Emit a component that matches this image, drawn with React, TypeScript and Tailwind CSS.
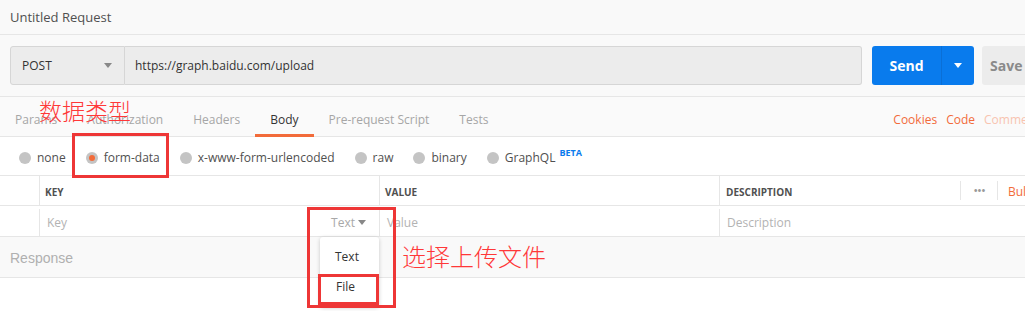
const tabs = ["Params", "Authorization", "Headers", "Body", "Pre-request Script", "Tests"];
const bodies = ["none", "form-data", "x-www-form-urlencoded", "raw", "binary", "GraphQL"];

function Caret({ className = "" }: { className?: string }) {
  return (
    <svg width="8" height="5" viewBox="0 0 8 5" className={className}>
      <path d="M0 0h8L4 5z" fill="currentColor" />
    </svg>
  );
}

export default function App() {
  return (
    <div className="relative h-[311px] w-[1025px] overflow-hidden bg-white font-['Open_Sans',sans-serif] text-[#505050]">
      {/* title */}
      <div className="flex h-[35px] items-center border-b border-[#e6e6e6] bg-[#f9f9f9] px-[10px] pt-[1px] text-[13px]">
        Untitled Request
      </div>

      {/* url bar */}
      <div className="flex h-[62px] items-center border-b border-[#e6e6e6] bg-[#f9f9f9] pl-[10px]">
        <div className="flex h-[39px] w-[115px] shrink-0 items-center justify-between rounded-l-[3px] border border-[#d6d6d6] bg-[#ececec] pl-[11px] pr-[12px] text-[12px] text-[#333]">
          POST
          <Caret className="text-[#888]" />
        </div>
        <div className="flex h-[39px] w-[737px] shrink-0 items-center rounded-r-[3px] border border-l-0 border-[#d6d6d6] bg-[#ececec] pl-[10px] text-[12px] text-[#333]">
          https://graph.baidu.com/upload
        </div>
        <div className="ml-[10px] flex h-[39px] w-[102px] shrink-0 rounded-[3px] bg-[#097bed] text-white">
          <div className="flex w-[69px] items-center justify-center text-[14px] font-bold">Send</div>
          <div className="flex flex-1 items-center justify-center border-l border-[#0a6fd6]">
            <Caret />
          </div>
        </div>
        <div className="ml-[8px] flex h-[39px] w-[60px] shrink-0 items-center rounded-l-[3px] bg-[#ececec] pl-[8px] text-[14px] font-bold text-[#8a8a8a]">
          Save
        </div>
      </div>

      {/* tabs */}
      <div className="flex h-[40px] items-stretch border-b border-[#e6e6e6] bg-[#fafafa] text-[12px]">
        {tabs.map((t) => (
          <div
            key={t}
            className={`relative flex shrink-0 items-center px-[15px] pt-[6px] ${
              t === "Body" ? "text-[#333]" : "text-[#a6a6a6]"
            }`}
          >
            {t}
            {t === "Body" && <div className="absolute bottom-[-1px] left-0 right-0 h-[3px] bg-[#f26b3a]" />}
          </div>
        ))}
        <div className="ml-auto flex shrink-0 items-center gap-[9px] pt-[6px] text-[12px]">
          <span className="text-[#f26b3a]">Cookies</span>
          <span className="text-[#f26b3a]">Code</span>
          <span className="w-[41px] overflow-hidden whitespace-nowrap text-[#f8c4b0]">Comments</span>
        </div>
      </div>

      {/* body types */}
      <div className="flex h-[39px] items-center border-b border-[#e6e6e6] pl-[19px] pt-[3px] text-[12px]">
        {bodies.map((b) => (
          <div key={b} className="mr-[20px] flex shrink-0 items-center gap-[6px]">
            <span className="flex h-[12px] w-[12px] items-center justify-center rounded-full bg-[#c4c4c4]">
              {b === "form-data" && <span className="h-[6px] w-[6px] rounded-full bg-[#f26b3a]" />}
            </span>
            <span className="text-[#505050]">{b}</span>
            {b === "GraphQL" && (
              <span className="-ml-[2px] -mt-[10px] text-[9px] font-bold text-[#097bed]">BETA</span>
            )}
          </div>
        ))}
      </div>

      {/* table header */}
      <div className="flex h-[30px] border-b border-[#e6e6e6] text-[10px] font-bold text-[#505050]">
        <div className="w-[40px] shrink-0 border-r border-[#e6e6e6]" />
        <div className="flex w-[340px] shrink-0 items-center border-r border-[#e6e6e6] pl-[5px] pt-[3px]">KEY</div>
        <div className="flex w-[340px] shrink-0 items-center border-r border-[#e6e6e6] pl-[5px] pt-[3px]">VALUE</div>
        <div className="flex w-[240px] shrink-0 items-center pl-[6px] pt-[3px]">DESCRIPTION</div>
        <div className="my-[5px] flex w-[38px] shrink-0 items-center justify-center border-l border-r border-[#e6e6e6] text-[13px] font-normal tracking-[-1px] text-[#999]">
          •••
        </div>
        <div className="flex shrink-0 items-center whitespace-nowrap pl-[10px] pt-[3px] text-[12px] font-normal text-[#f26b3a]">
          Bulk Edit
        </div>
      </div>

      {/* table row */}
      <div className="flex h-[31px] border-b border-[#e6e6e6] pt-[3px] text-[12px] text-[#b3b3b3]">
        <div className="w-[40px] shrink-0 border-r border-[#e6e6e6]" />
        <div className="flex w-[340px] shrink-0 items-center justify-between border-r border-[#e6e6e6] pl-[7px] pr-[13px]">
          Key
          <span className="flex items-center gap-[3px] text-[#a8a8a8]">
            Text <Caret className="text-[#888]" />
          </span>
        </div>
        <div className="flex w-[340px] shrink-0 items-center border-r border-[#e6e6e6] pl-[7px]">Value</div>
        <div className="flex items-center pl-[7px]">Description</div>
      </div>

      {/* response */}
      <div className="flex h-[41px] items-center border-b border-[#e6e6e6] bg-[#f9f9f9] pl-[10px] pt-[2px] font-['Liberation_Sans',sans-serif] text-[14px] text-[#b0b0b0]">
        Response
      </div>

      {/* dropdown menu */}
      <div className="absolute left-[320px] top-[237px] h-[70px] w-[59px] rounded-[3px] bg-white text-[12px] text-[#333] shadow-[0_1px_4px_rgba(0,0,0,0.2)]">
        <div className="pl-[15px] pt-[11px]">Text</div>
        <div className="pl-[16px] pt-[12px]">File</div>
      </div>

      {/* annotations */}
      <div className="absolute left-[39px] top-[93px] font-['Noto_Sans_CJK_SC',sans-serif] text-[23px] font-light text-[#ff3838]">
        数据类型
      </div>
      <div className="absolute left-[72px] top-[133px] h-[45px] w-[97px] border-[3px] border-[#ee3636]" />
      <div className="absolute left-[307px] top-[207px] h-[101px] w-[89px] border-[3px] border-[#ee3636]" />
      <div className="absolute left-[318px] top-[274px] h-[31px] w-[61px] border-[3px] border-[#ee3636]" />
      <div className="absolute left-[402px] top-[238px] font-['Noto_Sans_CJK_SC',sans-serif] text-[24px] font-light text-[#ff3838]">
        选择上传文件
      </div>
    </div>
  );
}
